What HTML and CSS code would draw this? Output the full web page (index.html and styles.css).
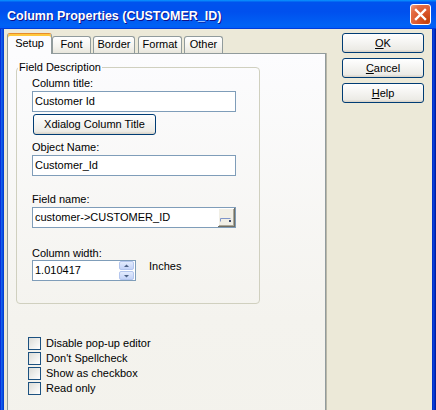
FILE: index.html
```html
<!DOCTYPE html>
<html>
<head>
<meta charset="utf-8">
<link rel="stylesheet" href="styles.css">
</head>
<body>
<div class="window">
  <div class="titlebar">
    <span class="title">Column Properties (CUSTOMER_ID)</span>
    <div class="close">
      <svg width="19" height="19" viewBox="0 0 19 19"><path d="M5 5 L14 14 M14 5 L5 14" stroke="#fff" stroke-width="2.4" stroke-linecap="square"/></svg>
    </div>
  </div>
  <div class="frame">
    <div class="client">
      <div class="tabctl">
        <div class="tabstrip">
          <div class="tab sel t-setup">Setup</div>
          <div class="tab t-font">Font</div>
          <div class="tab t-border">Border</div>
          <div class="tab t-format">Format</div>
          <div class="tab t-other">Other</div>
        </div>
        <div class="page">
          <fieldset class="group">
            <legend>Field Description</legend>
            <div class="fields">
              <div class="lbl l1">Column title:</div>
              <div class="edit">Customer Id</div>
              <div class="btn xbtn">Xdialog Column Title</div>
              <div class="lbl l2">Object Name:</div>
              <div class="edit">Customer_Id</div>
              <div class="lbl l3">Field name:</div>
              <div class="edit combo">
                <span class="etext">customer-&gt;CUSTOMER_ID</span>
                <div class="browse">
                  <svg width="15" height="17" viewBox="0 0 15 17"><path d="M2.5 10.5 H12.5 M2.5 10.5 V13.5" stroke="#7F94C8" stroke-width="1" fill="none"/><rect x="11" y="12" width="2" height="2" fill="#3C4A6E"/></svg>
                </div>
              </div>
              <div class="lbl l4">Column width:</div>
              <div class="spinrow">
                <div class="edit spin">
                  <span class="etext">1.010417</span>
                  <div class="spinbtns">
                    <div class="sb"><svg width="7" height="4" viewBox="0 0 7 4"><path d="M1 3 L3.5 0.5 L6 3 Z" fill="#4D6185"/></svg></div>
                    <div class="sb"><svg width="7" height="4" viewBox="0 0 7 4"><path d="M1 1 L3.5 3.5 L6 1 Z" fill="#4D6185"/></svg></div>
                  </div>
                </div>
                <span class="units">Inches</span>
              </div>
            </div>
          </fieldset>
          <div class="checks">
            <div class="chk"><span class="box"></span><span>Disable pop-up editor</span></div>
            <div class="chk"><span class="box"></span><span>Don't Spellcheck</span></div>
            <div class="chk"><span class="box"></span><span>Show as checkbox</span></div>
            <div class="chk"><span class="box"></span><span>Read only</span></div>
          </div>
        </div>
      </div>
      <div class="buttons">
        <div class="btn dlg"><span><u>O</u>K</span></div>
        <div class="btn dlg"><span><u>C</u>ancel</span></div>
        <div class="btn dlg"><span><u>H</u>elp</span></div>
      </div>
    </div>
  </div>
</div>
</body>
</html>
```
FILE: styles.css
```css
* { box-sizing: border-box; }
html, body { margin: 0; padding: 0; }
body {
  width: 436px;
  height: 410px;
  overflow: hidden;
  font-family: "Liberation Sans", Arial, sans-serif;
  font-size: 11px;
  line-height: 13px;
  color: #000;
  background: #0A46DC;
}
.window {
  width: 436px;
  height: 410px;
  display: flex;
  flex-direction: column;
}
.titlebar {
  height: 29px;
  flex: none;
  display: flex;
  align-items: flex-start;
  justify-content: space-between;
  padding: 0 5px 0 7px;
  background: linear-gradient(180deg, #0997ff, #0053ee 8%, #0050ee 40%, #0062f5 88%, #0060f0 93%, #005bff 95%, #003dd7 96%, #003dd7);
}
.title {
  margin-top: 9px;
  font-weight: bold;
  font-size: 12.5px;
  line-height: 15px;
  color: #fff;
  text-shadow: 1px 1px #0F1089;
  white-space: nowrap;
}
.close {
  margin-top: 4px;
  width: 21px;
  height: 21px;
  border: 1px solid #fff;
  border-radius: 3px;
  background: radial-gradient(circle at 85% 85%, #c2410b 0, #d9552a 40%, #e46d44 75%, #f3a183 100%);
  display: flex;
  align-items: center;
  justify-content: center;
}
.close svg { display: block; }
.frame {
  flex: 1;
  display: flex;
  padding: 0 4px;
  background: linear-gradient(to right, #0831D9 0 1px, #1660EA 1px 2px, #0A4FE3 2px 3px, #0040D5 3px 4px, transparent 4px calc(100% - 4px), #0030C8 calc(100% - 4px) calc(100% - 3px), #0A3FD8 calc(100% - 3px) calc(100% - 2px), #0030C8 calc(100% - 2px) calc(100% - 1px), #001EA0 calc(100% - 1px));
  overflow: hidden;
}
.client {
  flex: 1;
  display: flex;
  align-items: flex-start;
  background: #ECE9D8;
  overflow: hidden;
}
.tabctl {
  margin: 4px 0 0 3px;
  width: 319px;
  height: 400px;
  display: flex;
  flex-direction: column;
  flex: none;
}
.tabstrip {
  display: flex;
  align-items: flex-end;
  height: 20px;
  position: relative;
  z-index: 1;
}
.tab {
  height: 17px;
  border: 1px solid #919B9C;
  border-bottom: none;
  border-radius: 3px 3px 0 0;
  background: linear-gradient(180deg, #FFFFFF, #F4F3EE 60%, #E8E6DC);
  text-align: center;
  padding-top: 1px;
  white-space: nowrap;
}
.tab.sel {
  height: 21px;
  margin-bottom: -1px;
  padding-top: 3px;
  border-top: 1px solid #E68B2C;
  background: #FCFCFE;
  box-shadow: inset 0 2px #FFC83C;
}
.t-setup { width: 45px; }
.t-font { width: 39px; }
.t-border { width: 42px; margin-left: 2px; }
.t-format { width: 44px; margin-left: 3px; }
.t-other { width: 39px; margin-left: 2px; }
.page {
  flex: 1;
  border: 1px solid #919B9C;
  background: linear-gradient(180deg, #FCFCFE, #F4F3EE 70%, #F3F2EC);
  box-shadow: 1px 0 0 #B9B7A8;
  padding: 0 0 0 8px;
}
.group {
  margin: 7px 0 0 0;
  width: 244px;
  border: 1px solid #D0D0BF;
  border-radius: 4px;
  padding: 0 0 22px 1px;
  min-width: 0;
}
.group legend {
  padding: 0 1px;
  line-height: 13px;
}
.fields {
  padding-left: 14px;
  display: flex;
  flex-direction: column;
  align-items: flex-start;
}
.lbl { white-space: nowrap; }
.l1 { margin-top: 3px; }
.l2 { margin-top: 6px; }
.l3 { margin-top: 17px; }
.l4 { margin-top: 19px; }
.edit {
  margin-top: 1px;
  width: 204px;
  height: 21px;
  border: 1px solid #7F9DB9;
  background: #fff;
  padding: 0 0 0 2px;
  display: flex;
  align-items: center;
  white-space: nowrap;
}
.etext { flex: 1; }
.combo { padding-right: 0; }
.browse {
  width: 17px;
  height: 19px;
  background: #F1EFE6;
  border-right: 1px solid #716F64;
  border-bottom: 1px solid #716F64;
  box-shadow: inset 1px 1px #fff, inset -1px -1px #ACA899;
}
.browse svg { display: block; }
.spinrow {
  display: flex;
  align-items: flex-start;
  margin-top: 0;
}
.spin {
  width: 104px;
  margin-top: 0;
  padding-right: 1px;
}
.spinbtns {
  width: 15px;
  height: 19px;
  display: flex;
  flex-direction: column;
  gap: 1px;
}
.sb {
  flex: 1;
  border: 1px solid #B4C6EE;
  border-radius: 2px;
  background: linear-gradient(180deg, #E3EBFD, #C3D3F8);
  display: flex;
  align-items: center;
  justify-content: center;
}
.sb svg { display: block; }
.units {
  margin-left: 13px;
  margin-top: 0;
  line-height: 13px;
}
.btn {
  border: 1px solid #003C74;
  border-radius: 3px;
  background: linear-gradient(180deg, #fff, #ECEBE6 86%, #D6D0C5);
  display: flex;
  align-items: center;
  justify-content: center;
  white-space: nowrap;
}
.xbtn {
  margin-top: 2px;
  margin-left: 1px;
  width: 123px;
  height: 21px;
}
.checks {
  margin-top: 32px;
  padding-left: 12px;
  display: flex;
  flex-direction: column;
}
.chk {
  height: 15px;
  display: flex;
  align-items: center;
  line-height: 15px;
}
.box {
  width: 13px;
  height: 13px;
  border: 1px solid #1C5180;
  background: linear-gradient(135deg, #DCDCD7, #FFFFFF);
  margin-right: 5px;
  flex: none;
}
.buttons {
  margin: 4px 0 0 16px;
  display: flex;
  flex-direction: column;
  gap: 5px;
}
.dlg {
  width: 82px;
  height: 20px;
}
```
